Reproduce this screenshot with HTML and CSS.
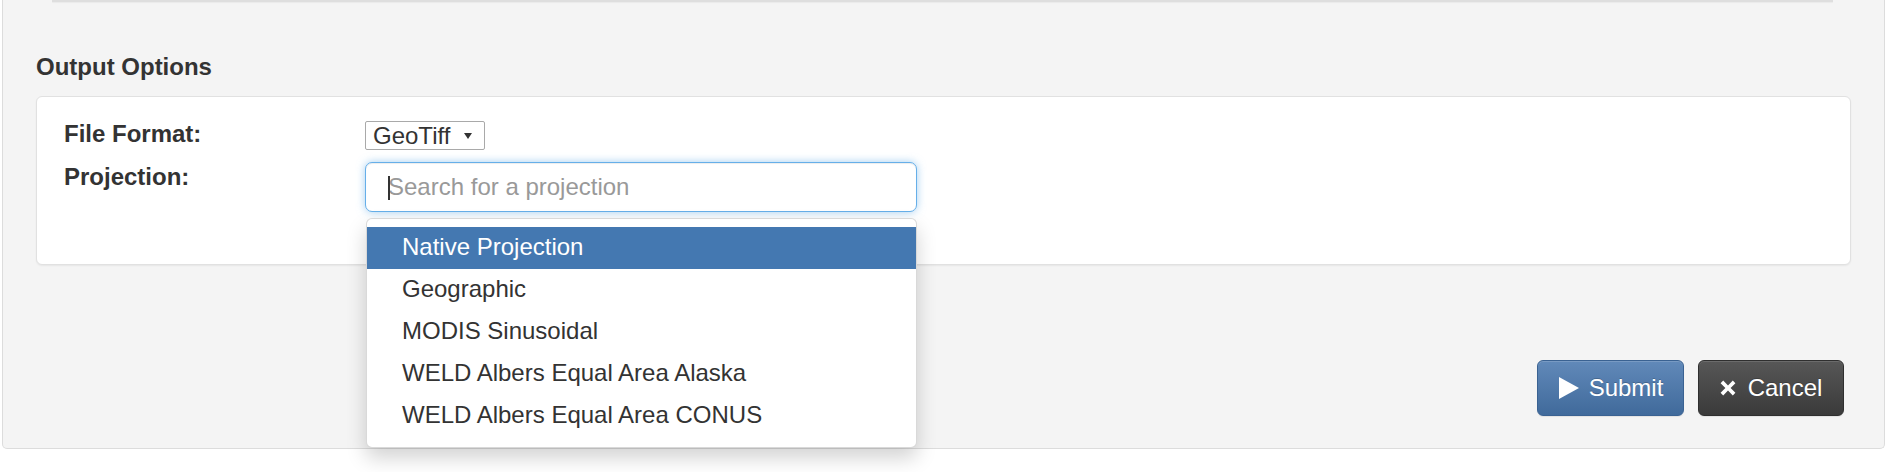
FILE: index.html
```html
<!DOCTYPE html>
<html lang="en">
<head>
<meta charset="utf-8">
<title>Output Options</title>
<link rel="stylesheet" href="styles.css">
</head>
<body>
<div class="panel">
  <div class="prev-edge"></div>
  <h3 class="section-title">Output Options</h3>
  <div class="card">
    <div class="form-row row-format">
      <div class="form-label">File Format:</div>
      <div class="form-field">
        <span class="select">GeoTiff<span class="select-arrow"></span></span>
      </div>
    </div>
    <div class="form-row row-proj">
      <div class="form-label">Projection:</div>
      <div class="form-field combo">
        <input class="search" type="text" placeholder="Search for a projection">
        <span class="text-caret"></span>
        <ul class="dropdown">
          <li class="item active">Native Projection</li>
          <li class="item">Geographic</li>
          <li class="item">MODIS Sinusoidal</li>
          <li class="item">WELD Albers Equal Area Alaska</li>
          <li class="item">WELD Albers Equal Area CONUS</li>
        </ul>
      </div>
    </div>
  </div>
  <div class="actions">
    <button class="btn btn-primary" type="button">
      <svg class="icon icon-play" width="21" height="22" viewBox="0 0 21 22"><path d="M1 0 L21 11 L1 22 Z" fill="#fff"/></svg>
      <span>Submit</span>
    </button>
    <button class="btn btn-dark" type="button">
      <svg class="icon icon-x" width="16" height="16" viewBox="0 0 16 16"><path d="M3.2 0.6 L8 5.4 L12.8 0.6 L15.4 3.2 L10.6 8 L15.4 12.8 L12.8 15.4 L8 10.6 L3.2 15.4 L0.6 12.8 L5.4 8 L0.6 3.2 Z" fill="#fff"/></svg>
      <span>Cancel</span>
    </button>
  </div>
</div>
</body>
</html>
```
FILE: styles.css
```css
html, body {
  margin: 0;
  padding: 0;
  background: #ffffff;
}

body {
  font-family: "Liberation Sans", Arial, sans-serif;
  font-size: 24px;
  color: #333333;
  width: 1894px;
  height: 472px;
  overflow: hidden;
}

.panel {
  margin: 0 9px 0 2px;
  background: #f4f4f4;
  border: 1px solid #dcdcdc;
  border-top: none;
  border-radius: 0 0 5px 5px;
  padding: 0 33px 32px 33px;
}

.prev-edge {
  height: 2px;
  margin: 0 18px 0 16px;
  background: #dedede;
  box-shadow: 0 1px 1px rgba(0, 0, 0, 0.04);
}

.section-title {
  margin: 48px 0 12px 0;
  font-size: 24px;
  line-height: 34px;
  font-weight: bold;
  color: #333333;
}

.card {
  background: #ffffff;
  border: 1px solid #e1e1e1;
  border-radius: 6px;
  box-shadow: 0 1px 2px rgba(0, 0, 0, 0.06);
  padding: 20px 27px 52px 27px;
}

.form-row {
  display: flex;
  align-items: flex-start;
}

.row-format {
  height: 43px;
}

.row-proj {
  height: 52px;
}

.form-label {
  width: 301px;
  flex: none;
  font-weight: bold;
  line-height: 34px;
  color: #333333;
}

.form-field {
  flex: none;
}

.select {
  display: inline-flex;
  align-items: center;
  margin-top: 4px;
  height: 29px;
  box-sizing: border-box;
  width: 120px;
  padding: 0 0 0 7px;
  border: 1px solid #a9a9a9;
  border-radius: 2px;
  background: #ffffff;
  line-height: 27px;
  color: #333333;
}

.select-arrow {
  display: inline-block;
  margin-left: 14px;
  width: 0;
  height: 0;
  border-left: 4px solid transparent;
  border-right: 4px solid transparent;
  border-top: 6px solid #333333;
}

.combo {
  position: relative;
  margin-top: 2px;
}

.search {
  display: block;
  width: 552px;
  height: 50px;
  box-sizing: border-box;
  margin: 0;
  padding: 0 22px;
  border: 1px solid #66afe9;
  border-radius: 7px;
  outline: none;
  background: #ffffff;
  font-family: "Liberation Sans", Arial, sans-serif;
  font-size: 24px;
  color: #555555;
  box-shadow: inset 0 1px 1px rgba(0, 0, 0, 0.075), 0 0 8px rgba(102, 175, 233, 0.6);
}

.search::placeholder {
  color: #999999;
}

.text-caret {
  position: absolute;
  left: 23px;
  top: 14px;
  width: 2px;
  height: 24px;
  background: #333333;
}

.dropdown {
  position: absolute;
  top: 56px;
  left: 1px;
  width: 551px;
  box-sizing: border-box;
  margin: 0;
  padding: 8px 0 10px 0;
  list-style: none;
  background: #ffffff;
  border: 1px solid rgba(0, 0, 0, 0.15);
  border-radius: 6px;
  box-shadow: 0 10px 20px rgba(0, 0, 0, 0.175);
  z-index: 10;
}

.item {
  padding: 3px 35px 5px 35px;
  line-height: 34px;
  color: #333333;
  white-space: nowrap;
}

.item.active {
  background: #4478b1;
  color: #ffffff;
}

.actions {
  display: flex;
  justify-content: flex-end;
  gap: 14px;
  margin-top: 95px;
  padding-right: 7px;
}

.btn {
  display: inline-flex;
  align-items: center;
  justify-content: center;
  box-sizing: border-box;
  height: 56px;
  padding: 0;
  border-radius: 6px;
  font-family: "Liberation Sans", Arial, sans-serif;
  font-size: 24px;
  line-height: 34px;
  color: #ffffff;
  text-shadow: 0 -1px 0 rgba(0, 0, 0, 0.2);
  cursor: pointer;
}

.btn-primary {
  width: 147px;
  gap: 10px;
  border: 1px solid #3a6292;
  background: linear-gradient(#6189b9, #406a9b);
  box-shadow: inset 0 1px 0 rgba(255, 255, 255, 0.15), 0 1px 1px rgba(0, 0, 0, 0.075);
}

.btn-dark {
  width: 146px;
  gap: 12px;
  border: 1px solid #2f2f2f;
  background: linear-gradient(#575757, #3a3a3a);
  box-shadow: inset 0 1px 0 rgba(255, 255, 255, 0.12), 0 1px 1px rgba(0, 0, 0, 0.075);
}

.icon {
  display: block;
  flex: none;
}
```
